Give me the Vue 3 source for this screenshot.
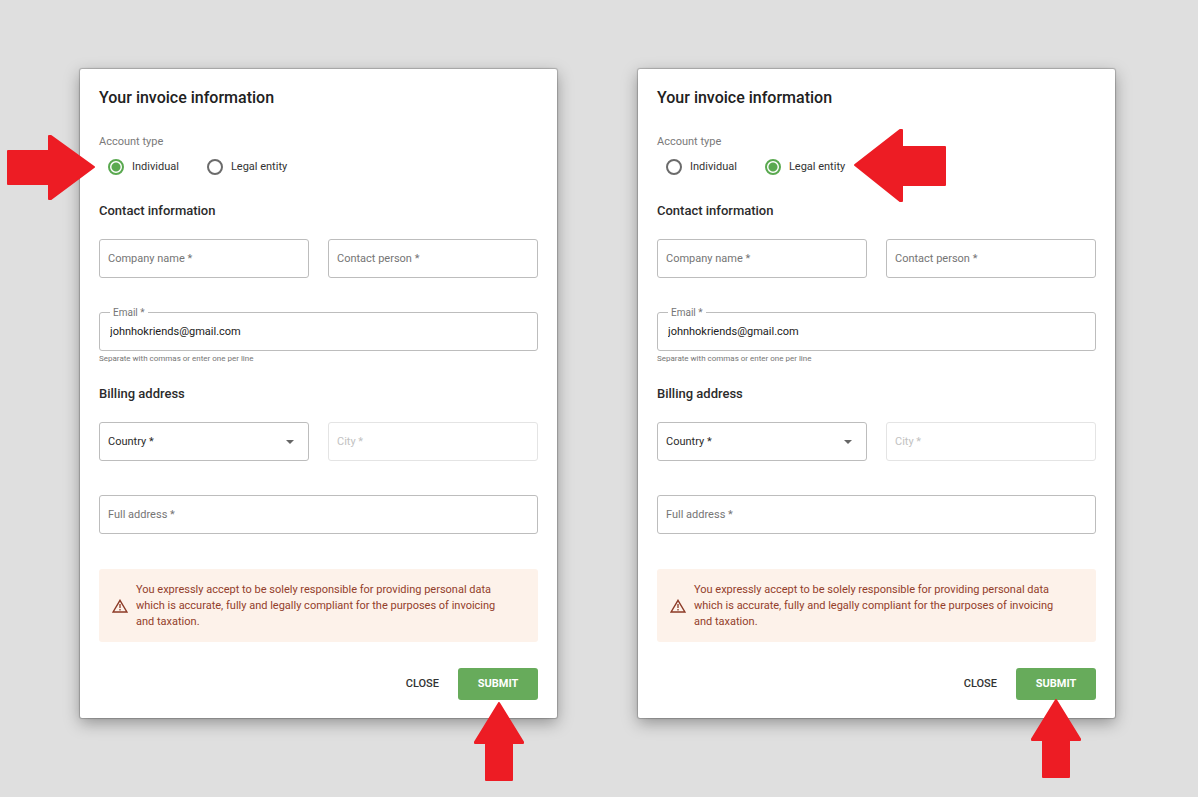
<script setup>
import { reactive } from 'vue'

const forms = reactive([
  {
    id: 'individual',
    type: 'individual',
    email: 'johnhokriends@gmail.com',
    typeArrow: { name: 'arrow-right', width: 88, height: 66, points: '1,16 42,16 42,1 44,1 87,32 44,64 42,64 42,49 1,49' },
    submitArrow: 'arrow-submit-low',
  },
  {
    id: 'legal',
    type: 'legal',
    email: 'johnhokriends@gmail.com',
    typeArrow: { name: 'arrow-left', width: 92, height: 74, points: '1,36 46,1 48,1 48,18 91,18 91,56 48,56 48,72 46,72' },
    submitArrow: 'arrow-submit-high',
  },
])
</script>

<template>
  <main class="page">
    <form v-for="form in forms" :key="form.id" class="card" @submit.prevent>
      <h1 class="title">Your invoice information</h1>

      <div class="types" role="radiogroup" :aria-labelledby="`${form.id}-type`">
        <span :id="`${form.id}-type`" class="caption">Account type</span>
        <div class="options">
          <label class="option">
            <input v-model="form.type" class="radio" type="radio" :name="`${form.id}-account`" value="individual" />
            Individual
          </label>
          <label class="option">
            <input v-model="form.type" class="radio" type="radio" :name="`${form.id}-account`" value="legal" />
            Legal entity
          </label>
        </div>
      </div>

      <h2 class="subtitle">Contact information</h2>
      <div class="row">
        <div class="field">
          <input :id="`${form.id}-company`" class="control" type="text" />
          <label class="label" :for="`${form.id}-company`">Company name *</label>
        </div>
        <div class="field">
          <input :id="`${form.id}-person`" class="control" type="text" />
          <label class="label" :for="`${form.id}-person`">Contact person *</label>
        </div>
      </div>

      <div class="field">
        <input :id="`${form.id}-email`" v-model="form.email" class="control" type="text" />
        <label class="label floating" :for="`${form.id}-email`">Email *</label>
      </div>
      <p class="helper">Separate with commas or enter one per line</p>

      <h2 class="subtitle">Billing address</h2>
      <div class="row">
        <div class="field">
          <select :id="`${form.id}-country`" class="control">
            <option value=""></option>
          </select>
          <label class="label dark" :for="`${form.id}-country`">Country *</label>
          <svg class="caret" width="8" height="4" viewBox="0 0 8 4" aria-hidden="true">
            <path d="M0 0h8L4 4z" fill="#666" />
          </svg>
        </div>
        <div class="field">
          <input :id="`${form.id}-city`" class="control" type="text" disabled />
          <label class="label muted" :for="`${form.id}-city`">City *</label>
        </div>
      </div>

      <div class="field">
        <input :id="`${form.id}-address`" class="control" type="text" />
        <label class="label" :for="`${form.id}-address`">Full address *</label>
      </div>

      <div class="notice">
        <svg class="warning" width="16" height="14" viewBox="0 0 16 14" fill="none" stroke="#8c3a26" aria-hidden="true">
          <path d="M8 1.3 14.9 13H1.1z" stroke-width="1.4" />
          <path d="M8 5v4M8 10v1.4" stroke-width="1.3" />
        </svg>
        <p class="notice-text">
          You expressly accept to be solely responsible for providing personal data which is accurate, fully and
          legally compliant for the purposes of invoicing and taxation.
        </p>
      </div>

      <div class="actions">
        <button class="button" type="button">CLOSE</button>
        <button class="button primary" type="submit">SUBMIT</button>
      </div>

      <svg
        class="arrow"
        :class="form.typeArrow.name"
        :width="form.typeArrow.width"
        :height="form.typeArrow.height"
        aria-hidden="true"
      >
        <polygon :points="form.typeArrow.points" />
      </svg>
      <svg class="arrow" :class="form.submitArrow" width="50" height="80" aria-hidden="true">
        <polygon points="25,1 49,40 49,41 38,41 38,78 12,78 12,41 1,41 1,40" />
      </svg>
    </form>
  </main>
</template>

<style>
body {
  background: #dfdfdf;
}
</style>

<style scoped>
.page {
  display: grid;
  grid-template-columns: 1fr 1fr;
  gap: 81px;
  padding: 69px 83px 79px 80px;
  font-family: Roboto, "Liberation Sans", sans-serif;
  font-size: 11px;
  line-height: 16px;
  color: #333;
}
.card {
  position: relative;
  padding: 19px 19px 18px;
  background: #fff;
  border-radius: 2px;
  box-shadow: 0 0 1px 1px rgba(0, 0, 0, 0.2), 0 5px 16px rgba(0, 0, 0, 0.34);
}
.title {
  margin: 0;
  font-size: 16px;
  line-height: 20px;
  font-weight: 500;
  color: #212121;
}
.types {
  margin: 26px 0 28px;
}
.caption {
  display: block;
  color: #7a7a7a;
}
.options {
  display: flex;
  gap: 28px;
  margin-top: 9px;
  padding-left: 9px;
}
.option {
  display: flex;
  align-items: center;
  gap: 8px;
}
.radio {
  appearance: none;
  box-sizing: border-box;
  width: 16px;
  height: 16px;
  margin: 0;
  border: 2px solid #6b6b6b;
  border-radius: 50%;
}
.radio:checked {
  border-color: #5aa950;
  background: radial-gradient(circle, #5aa950 4px, transparent 5px);
}
.subtitle {
  margin: 0 0 20px;
  font-size: 13px;
  line-height: 16px;
  font-weight: 500;
  color: #2b2b2b;
}
.row {
  display: grid;
  grid-template-columns: 1fr 1fr;
  gap: 19px;
  margin-bottom: 34px;
}
.field {
  position: relative;
}
.control {
  display: block;
  appearance: none;
  box-sizing: border-box;
  width: 100%;
  height: 39px;
  padding: 0 10px;
  border: 1px solid #bdbdbd;
  border-radius: 3px;
  background: #fff;
  font: inherit;
  color: #212121;
}
.control:disabled {
  border-color: #e4e4e4;
}
.label {
  position: absolute;
  left: 9px;
  top: 12px;
  color: #757575;
  pointer-events: none;
}
.label.floating {
  left: 11px;
  top: -6px;
  padding: 0 3px;
  background: #fff;
  font-size: 10px;
  line-height: 14px;
}
.label.dark {
  color: #2b2b2b;
}
.label.muted {
  color: #c2c2c2;
}
.caret {
  position: absolute;
  right: 15px;
  top: 18px;
}
.helper {
  margin: 2px 0 21px;
  font-size: 8px;
  line-height: 12px;
  color: #757575;
}
.notice {
  display: flex;
  align-items: center;
  gap: 8px;
  margin-top: 35px;
  padding: 13px 28px 12px 13px;
  border-radius: 3px;
  background: #fdf2ea;
  color: #93402b;
}
.warning {
  flex: none;
}
.notice-text {
  margin: 0;
}
.actions {
  display: flex;
  justify-content: flex-end;
  margin-top: 26px;
}
.button {
  height: 32px;
  padding: 0 19px;
  border: 0;
  border-radius: 3px;
  background: none;
  font: inherit;
  font-weight: 500;
  color: #333;
}
.button.primary {
  min-width: 80px;
  background: #67ab5b;
  font-weight: 700;
  color: #fff;
}
.arrow {
  position: absolute;
  pointer-events: none;
  fill: #ed1c24;
  stroke: #ed1c24;
  stroke-width: 2px;
  stroke-linejoin: round;
}
.arrow-right {
  left: -73px;
  top: 66px;
}
.arrow-left {
  left: 216px;
  top: 60px;
}
.arrow-submit-low {
  right: 33px;
  bottom: -64px;
}
.arrow-submit-high {
  right: 34px;
  bottom: -61px;
}
</style>
